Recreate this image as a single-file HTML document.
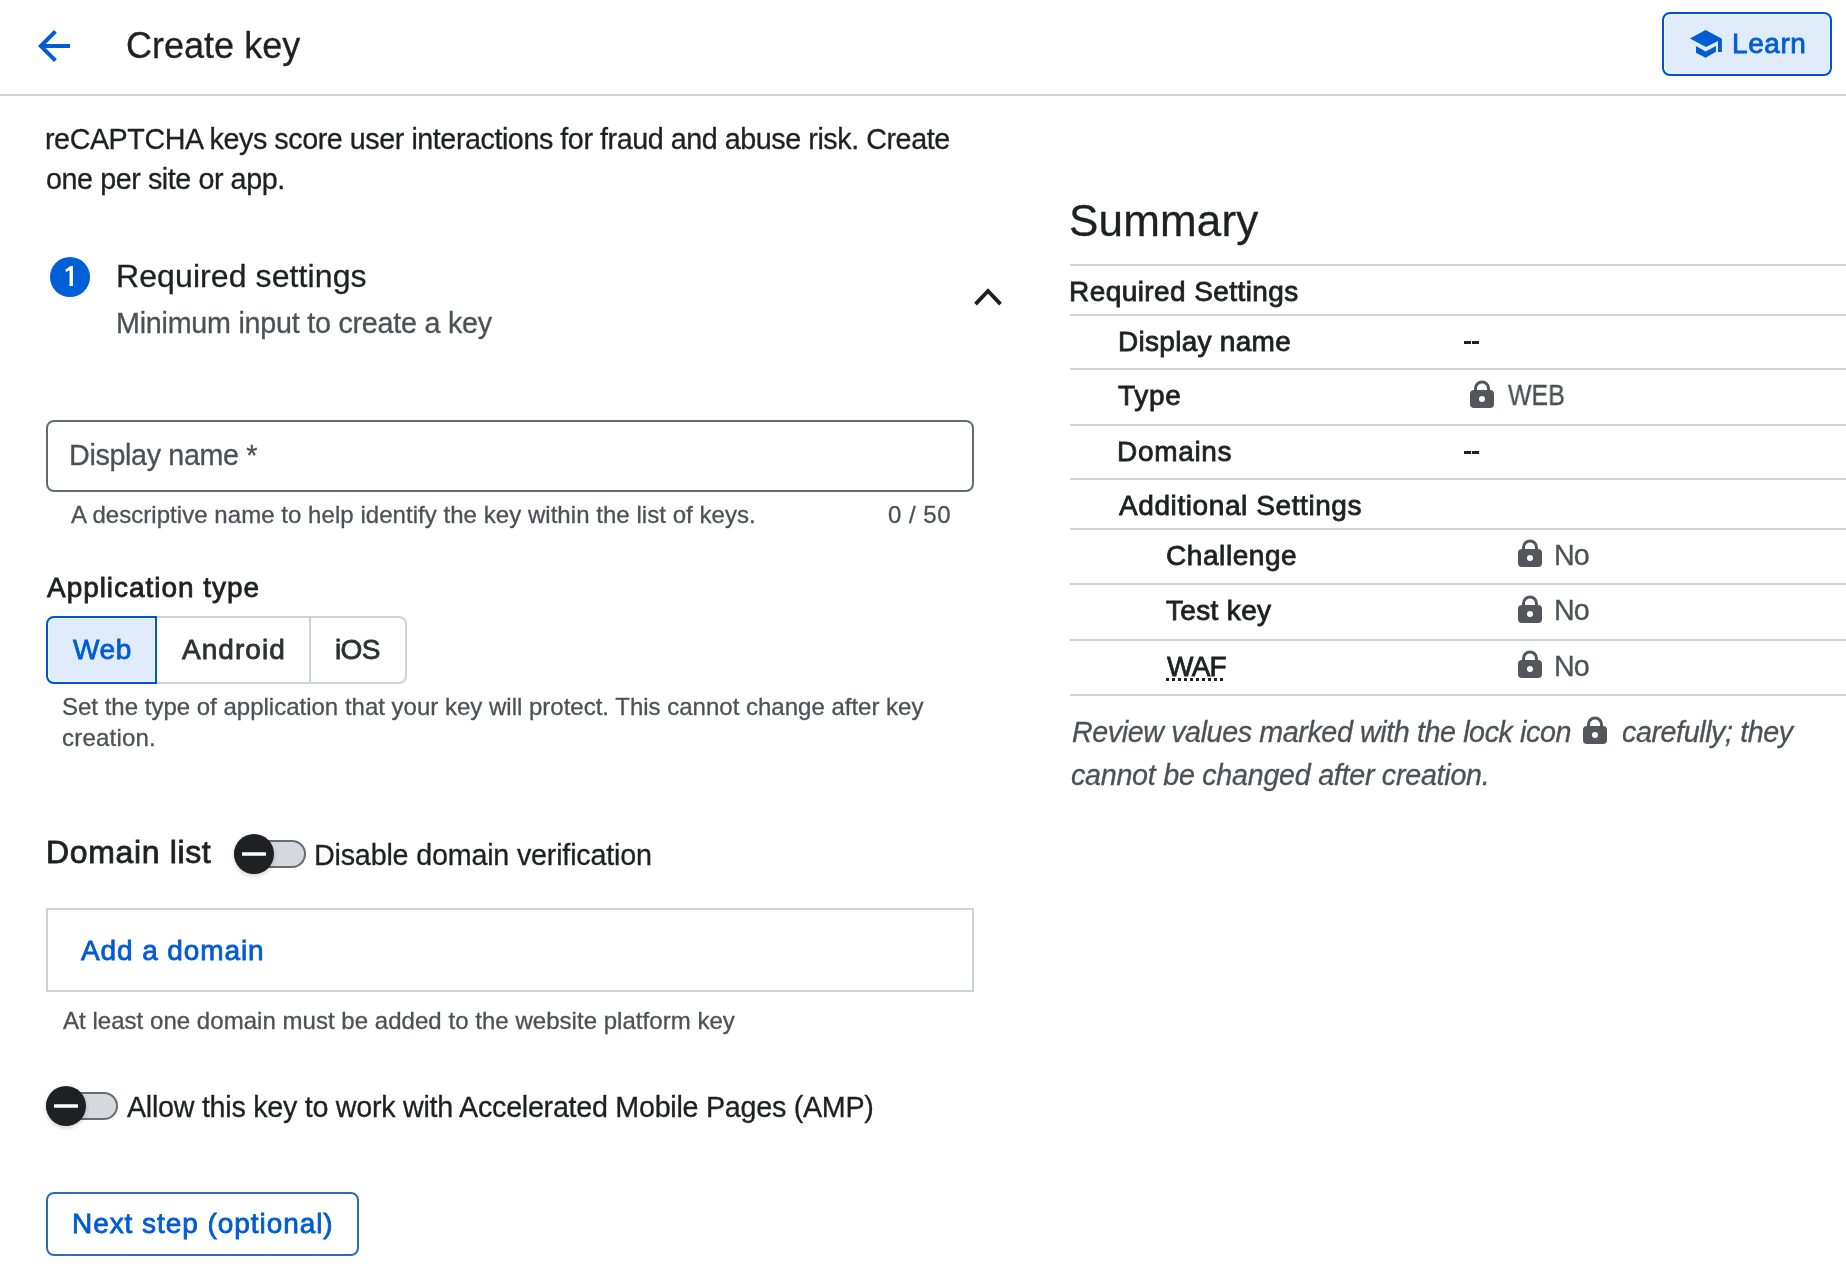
<!DOCTYPE html>
<html><head><meta charset="utf-8"><title>Create key</title>
<style>
html,body{margin:0;padding:0;background:#fff;width:1846px;height:1286px;overflow:hidden;position:relative}
.ab{position:absolute;box-sizing:border-box}
.t{position:absolute;white-space:nowrap;font-family:"Liberation Sans",sans-serif;will-change:transform}
</style></head><body>

<svg class="ab" style="left:30px;top:22px" width="48" height="48" viewBox="0 0 24 24"><path d="M20 11H7.83l5.59-5.59L12 4l-8 8 8 8 1.41-1.41L7.83 13H20v-2z" fill="#005bd5"/></svg>
<div class="ab" style="left:0;top:94px;width:1846px;height:2px;background:#cfd3d8"></div>
<div class="ab" style="left:1662px;top:12px;width:170px;height:64px;border:2px solid #0052d2;border-radius:8px;background:#e1ecfb;box-shadow:inset 0 0 0 1px #f2f6fd"></div>
<svg class="ab" style="left:1680px;top:20px" width="50" height="50" viewBox="1680 20 50 50"><polygon points="1689.9,38.5 1705.6,29.9 1721.9,38.8 1721.9,51.9 1718,51.9 1718,41 1705.9,46.9" fill="#005bd5"/><polygon points="1696,46 1705.6,51.6 1715.9,46 1715.9,51.8 1705.6,57.8 1696,52.7" fill="#005bd5"/></svg>
<div class="ab" style="left:50px;top:257px;width:40px;height:40px;border-radius:50%;background:#005fd6"></div>
<svg class="ab" style="left:50px;top:257px" width="40" height="40" viewBox="50 257 40 40"><polygon points="70.6,266 72.92,266 72.92,285.9 69.56,285.9 69.56,270.2 66.4,272 65.1,269.8" fill="#fff"/></svg>
<svg class="ab" style="left:960px;top:270px" width="60" height="50" viewBox="960 270 60 50"><polyline points="975.5,304.1 988,291.0 1000.5,304.1" fill="none" stroke="#1f2023" stroke-width="3.9" stroke-linejoin="miter"/></svg>
<div class="ab" style="left:46px;top:420px;width:928px;height:72px;border:2px solid #646b6f;border-radius:8px"></div>
<div class="ab" style="left:46px;top:616px;width:361px;height:68px;border:2px solid #cfd3d8;border-radius:8px"></div>
<div class="ab" style="left:309px;top:616px;width:2px;height:68px;background:#cfd3d8"></div>
<div class="ab" style="left:46px;top:616px;width:111px;height:68px;border:2px solid #0055cc;border-radius:8px 0 0 8px;background:#e1ecfb;box-shadow:inset 0 0 0 1px #f2f6fd"></div>
<div class="ab" style="left:234px;top:840px;width:72px;height:28px;border:2px solid #656d71;border-radius:14px;background:#d5d9de"></div><div class="ab" style="left:234px;top:834px;width:40px;height:40px;border-radius:50%;background:#1f2023;box-shadow:0 2px 4px rgba(0,0,0,.18)"></div><svg class="ab" style="left:234px;top:834px" width="40" height="40" viewBox="0 0 40 40"><rect x="8" y="18.3" width="24" height="3.4" rx="0.6" fill="#fff"/></svg>
<div class="ab" style="left:46px;top:1092px;width:72px;height:28px;border:2px solid #656d71;border-radius:14px;background:#d5d9de"></div><div class="ab" style="left:46px;top:1086px;width:40px;height:40px;border-radius:50%;background:#1f2023;box-shadow:0 2px 4px rgba(0,0,0,.18)"></div><svg class="ab" style="left:46px;top:1086px" width="40" height="40" viewBox="0 0 40 40"><rect x="8" y="18.3" width="24" height="3.4" rx="0.6" fill="#fff"/></svg>
<div class="ab" style="left:46px;top:908px;width:928px;height:84px;border:2px solid #cfd3d8"></div>
<div class="ab" style="left:46px;top:1192px;width:313px;height:64px;border:2px solid #2e6cba;border-radius:8px"></div>
<div class="ab" style="left:1070px;top:264px;width:776px;height:2px;background:#cfd3d8"></div>
<div class="ab" style="left:1070px;top:314px;width:776px;height:2px;background:#cfd3d8"></div>
<div class="ab" style="left:1070px;top:368px;width:776px;height:2px;background:#cfd3d8"></div>
<div class="ab" style="left:1070px;top:424px;width:776px;height:2px;background:#cfd3d8"></div>
<div class="ab" style="left:1070px;top:478px;width:776px;height:2px;background:#cfd3d8"></div>
<div class="ab" style="left:1070px;top:528px;width:776px;height:2px;background:#cfd3d8"></div>
<div class="ab" style="left:1070px;top:583px;width:776px;height:2px;background:#cfd3d8"></div>
<div class="ab" style="left:1070px;top:639px;width:776px;height:2px;background:#cfd3d8"></div>
<div class="ab" style="left:1070px;top:694px;width:776px;height:2px;background:#cfd3d8"></div>
<svg class="ab" style="left:1470px;top:380px" width="24" height="28" viewBox="0 0 24 28"><path d="M5.5 11V8.5a6.5 6.5 0 0 1 13 0V11" fill="none" stroke="#53565b" stroke-width="3"/><rect x="0" y="10" width="24" height="18" rx="4" fill="#53565b"/><circle cx="12" cy="19" r="3" fill="#fff"/></svg>
<svg class="ab" style="left:1518px;top:539px" width="24" height="28" viewBox="0 0 24 28"><path d="M5.5 11V8.5a6.5 6.5 0 0 1 13 0V11" fill="none" stroke="#53565b" stroke-width="3"/><rect x="0" y="10" width="24" height="18" rx="4" fill="#53565b"/><circle cx="12" cy="19" r="3" fill="#fff"/></svg>
<svg class="ab" style="left:1518px;top:595px" width="24" height="28" viewBox="0 0 24 28"><path d="M5.5 11V8.5a6.5 6.5 0 0 1 13 0V11" fill="none" stroke="#53565b" stroke-width="3"/><rect x="0" y="10" width="24" height="18" rx="4" fill="#53565b"/><circle cx="12" cy="19" r="3" fill="#fff"/></svg>
<svg class="ab" style="left:1518px;top:650px" width="24" height="28" viewBox="0 0 24 28"><path d="M5.5 11V8.5a6.5 6.5 0 0 1 13 0V11" fill="none" stroke="#53565b" stroke-width="3"/><rect x="0" y="10" width="24" height="18" rx="4" fill="#53565b"/><circle cx="12" cy="19" r="3" fill="#fff"/></svg>
<svg class="ab" style="left:1583px;top:716px" width="24" height="28" viewBox="0 0 24 28"><path d="M5.5 11V8.5a6.5 6.5 0 0 1 13 0V11" fill="none" stroke="#53565b" stroke-width="3"/><rect x="0" y="10" width="24" height="18" rx="4" fill="#53565b"/><circle cx="12" cy="19" r="3" fill="#fff"/></svg>
<div class="ab" style="left:1464px;top:341px;width:7px;height:3px;background:#1f2023"></div>
<div class="ab" style="left:1472px;top:341px;width:7px;height:3px;background:#1f2023"></div>
<div class="ab" style="left:1464px;top:451px;width:7px;height:3px;background:#1f2023"></div>
<div class="ab" style="left:1472px;top:451px;width:7px;height:3px;background:#1f2023"></div>
<div class="ab" style="left:1166px;top:678px;width:3px;height:3px;background:#1f2023"></div>
<div class="ab" style="left:1172px;top:678px;width:3px;height:3px;background:#1f2023"></div>
<div class="ab" style="left:1178px;top:678px;width:3px;height:3px;background:#1f2023"></div>
<div class="ab" style="left:1184px;top:678px;width:3px;height:3px;background:#1f2023"></div>
<div class="ab" style="left:1190px;top:678px;width:3px;height:3px;background:#1f2023"></div>
<div class="ab" style="left:1196px;top:678px;width:3px;height:3px;background:#1f2023"></div>
<div class="ab" style="left:1202px;top:678px;width:3px;height:3px;background:#1f2023"></div>
<div class="ab" style="left:1208px;top:678px;width:3px;height:3px;background:#1f2023"></div>
<div class="ab" style="left:1214px;top:678px;width:3px;height:3px;background:#1f2023"></div>
<div class="ab" style="left:1220px;top:678px;width:3px;height:3px;background:#1f2023"></div>
<div class="t" style="left:126.40px;top:28.0px;font-size:36px;line-height:36px;letter-spacing:0.011px;color:#1f2023;-webkit-text-stroke:0.3px #1f2023;">Create key</div>
<div class="t" style="left:1731.90px;top:29.8px;font-size:28px;line-height:28px;letter-spacing:0.575px;color:#005bd5;-webkit-text-stroke:0.8px #005bd5;">Learn</div>
<div class="t" style="left:44.80px;top:125.3px;font-size:28.7px;line-height:28.7px;letter-spacing:-0.440px;color:#1f2023;-webkit-text-stroke:0.3px #1f2023;">reCAPTCHA keys score user interactions for fraud and abuse risk. Create</div>
<div class="t" style="left:45.80px;top:164.5px;font-size:28.7px;line-height:28.7px;letter-spacing:-0.421px;color:#1f2023;-webkit-text-stroke:0.3px #1f2023;">one per site or app.</div>
<div class="t" style="left:116.20px;top:259.7px;font-size:32px;line-height:32px;letter-spacing:0.094px;color:#1f2023;-webkit-text-stroke:0.3px #1f2023;">Required settings</div>
<div class="t" style="left:116.20px;top:309.0px;font-size:28.7px;line-height:28.7px;letter-spacing:-0.236px;color:#4d5156;-webkit-text-stroke:0.3px #4d5156;">Minimum input to create a key</div>
<div class="t" style="left:69.40px;top:441.0px;font-size:28.7px;line-height:28.7px;letter-spacing:-0.338px;color:#4d5156;-webkit-text-stroke:0.3px #4d5156;">Display name *</div>
<div class="t" style="left:70.60px;top:502.8px;font-size:24px;line-height:24px;letter-spacing:0.045px;color:#4d5156;-webkit-text-stroke:0.3px #4d5156;">A descriptive name to help identify the key within the list of keys.</div>
<div class="t" style="left:887.50px;top:502.8px;font-size:24px;line-height:24px;letter-spacing:0.500px;color:#4d5156;-webkit-text-stroke:0.3px #4d5156;">0 / 50</div>
<div class="t" style="left:47.30px;top:574.3px;font-size:28px;line-height:28px;letter-spacing:0.953px;color:#1f2023;-webkit-text-stroke:0.8px #1f2023;">Application type</div>
<div class="t" style="left:72.90px;top:636.2px;font-size:28px;line-height:28px;letter-spacing:0.600px;color:#005bd5;-webkit-text-stroke:0.8px #005bd5;">Web</div>
<div class="t" style="left:182.30px;top:636.2px;font-size:28px;line-height:28px;letter-spacing:1.033px;color:#2f3134;-webkit-text-stroke:0.8px #2f3134;">Android</div>
<div class="t" style="left:335.00px;top:636.2px;font-size:28px;line-height:28px;letter-spacing:-0.600px;color:#2f3134;-webkit-text-stroke:0.8px #2f3134;">iOS</div>
<div class="t" style="left:61.90px;top:694.6px;font-size:24px;line-height:24px;letter-spacing:0.001px;color:#4d5156;-webkit-text-stroke:0.3px #4d5156;">Set the type of application that your key will protect. This cannot change after key</div>
<div class="t" style="left:61.70px;top:726.4px;font-size:24px;line-height:24px;letter-spacing:0.213px;color:#4d5156;-webkit-text-stroke:0.3px #4d5156;">creation.</div>
<div class="t" style="left:46.20px;top:835.8px;font-size:32px;line-height:32px;letter-spacing:0.640px;color:#1f2023;-webkit-text-stroke:0.8px #1f2023;">Domain list</div>
<div class="t" style="left:314.30px;top:841.0px;font-size:28.7px;line-height:28.7px;letter-spacing:-0.188px;color:#1f2023;-webkit-text-stroke:0.3px #1f2023;">Disable domain verification</div>
<div class="t" style="left:80.70px;top:936.7px;font-size:28px;line-height:28px;letter-spacing:0.900px;color:#005bd5;-webkit-text-stroke:0.8px #005bd5;">Add a domain</div>
<div class="t" style="left:62.50px;top:1008.6px;font-size:24px;line-height:24px;letter-spacing:0.035px;color:#4d5156;-webkit-text-stroke:0.3px #4d5156;">At least one domain must be added to the website platform key</div>
<div class="t" style="left:127.20px;top:1093.1px;font-size:28.7px;line-height:28.7px;letter-spacing:-0.267px;color:#1f2023;-webkit-text-stroke:0.3px #1f2023;">Allow this key to work with Accelerated Mobile Pages (AMP)</div>
<div class="t" style="left:71.90px;top:1209.5px;font-size:28px;line-height:28px;letter-spacing:0.942px;color:#005bd5;-webkit-text-stroke:0.8px #005bd5;">Next step (optional)</div>
<div class="t" style="left:1068.90px;top:198.7px;font-size:44px;line-height:44px;letter-spacing:0.183px;color:#1f2023;-webkit-text-stroke:0.3px #1f2023;">Summary</div>
<div class="t" style="left:1069.25px;top:278.2px;font-size:28px;line-height:28px;letter-spacing:0.422px;color:#1f2023;-webkit-text-stroke:0.8px #1f2023;">Required Settings</div>
<div class="t" style="left:1117.70px;top:328.1px;font-size:28px;line-height:28px;letter-spacing:0.282px;color:#1f2023;-webkit-text-stroke:0.8px #1f2023;">Display name</div>
<div class="t" style="left:1117.60px;top:382.1px;font-size:28px;line-height:28px;letter-spacing:0.667px;color:#1f2023;-webkit-text-stroke:0.8px #1f2023;">Type</div>
<div class="t" style="left:1507.80px;top:380.7px;font-size:28.7px;line-height:28.7px;letter-spacing:0.000px;color:#4d5156;-webkit-text-stroke:0.3px #4d5156;transform:scaleX(0.86875);transform-origin:0px 0;">WEB</div>
<div class="t" style="left:1117.00px;top:438.1px;font-size:28px;line-height:28px;letter-spacing:0.683px;color:#1f2023;-webkit-text-stroke:0.8px #1f2023;">Domains</div>
<div class="t" style="left:1119.00px;top:492.0px;font-size:28px;line-height:28px;letter-spacing:0.589px;color:#1f2023;-webkit-text-stroke:0.8px #1f2023;">Additional Settings</div>
<div class="t" style="left:1165.80px;top:541.7px;font-size:28px;line-height:28px;letter-spacing:0.575px;color:#1f2023;-webkit-text-stroke:0.8px #1f2023;">Challenge</div>
<div class="t" style="left:1554.30px;top:540.7px;font-size:28.7px;line-height:28.7px;letter-spacing:-1.000px;color:#4d5156;-webkit-text-stroke:0.3px #4d5156;">No</div>
<div class="t" style="left:1165.70px;top:596.9px;font-size:28px;line-height:28px;letter-spacing:0.343px;color:#1f2023;-webkit-text-stroke:0.8px #1f2023;">Test key</div>
<div class="t" style="left:1554.30px;top:595.9px;font-size:28.7px;line-height:28.7px;letter-spacing:-1.000px;color:#4d5156;-webkit-text-stroke:0.3px #4d5156;">No</div>
<div class="t" style="left:1166.70px;top:652.8px;font-size:28px;line-height:28px;letter-spacing:-0.750px;color:#1f2023;-webkit-text-stroke:0.8px #1f2023;">WAF</div>
<div class="t" style="left:1554.30px;top:651.8px;font-size:28.7px;line-height:28.7px;letter-spacing:-1.000px;color:#4d5156;-webkit-text-stroke:0.3px #4d5156;">No</div>
<div class="t" style="left:1072.40px;top:717.6px;font-size:28.7px;line-height:28.7px;letter-spacing:-0.408px;color:#4d5156;-webkit-text-stroke:0.3px #4d5156;font-style:italic;">Review values marked with the lock icon</div>
<div class="t" style="left:1621.80px;top:717.6px;font-size:28.7px;line-height:28.7px;letter-spacing:-0.421px;color:#4d5156;-webkit-text-stroke:0.3px #4d5156;font-style:italic;">carefully; they</div>
<div class="t" style="left:1071.40px;top:760.5px;font-size:28.7px;line-height:28.7px;letter-spacing:-0.272px;color:#4d5156;-webkit-text-stroke:0.3px #4d5156;font-style:italic;">cannot be changed after creation.</div>
</body></html>
